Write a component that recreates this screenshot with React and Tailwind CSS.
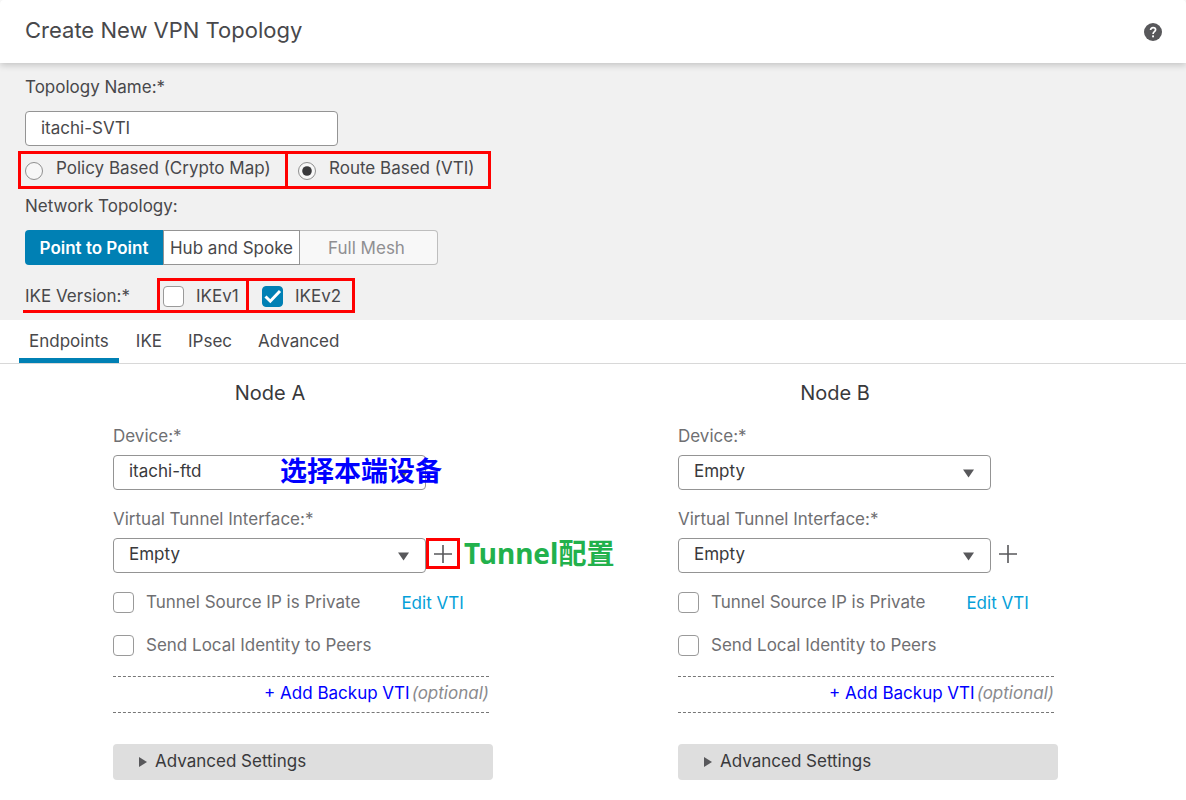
import { useState } from "react";

function Tick({ id, label, on = false }) {
  return (
    <span className="flex items-start gap-3">
      <span className="relative flex">
        <input
          id={id}
          type="checkbox"
          defaultChecked={on}
          className="peer h-[21px] w-[21px] appearance-none rounded border border-[#9a9a9a] bg-white checked:border-[#0080b4] checked:bg-[#0080b4]"
        />
        <svg
          viewBox="0 0 21 21"
          className="pointer-events-none absolute inset-0 hidden h-[21px] w-[21px] peer-checked:block"
          fill="none"
          stroke="white"
          strokeWidth="3"
        >
          <path d="M3.5 10.5 8.3 15.2 18 5" />
        </svg>
      </span>
      <label htmlFor={id} className="leading-5">
        {label}
      </label>
    </span>
  );
}

function Radio({ id, label, value, onPick, className }) {
  return (
    <span className={`flex h-8 items-start ${className}`}>
      <span className="relative mt-2 flex">
        <input
          id={id}
          name="topology-kind"
          type="radio"
          checked={value}
          onChange={onPick}
          className="peer h-[18px] w-[18px] appearance-none rounded-full border border-[#8f8f8f] bg-[#f7f7f7]"
        />
        <svg viewBox="0 0 18 18" className="pointer-events-none absolute inset-0 hidden peer-checked:block">
          <circle cx="9" cy="9" r="4.8" fill="#39393b" />
        </svg>
      </span>
      <label htmlFor={id} className="mt-1 leading-5">
        {label}
      </label>
    </span>
  );
}

function Picker({ id, value, children }) {
  return (
    <span className="relative block w-[313px] shrink-0">
      <select
        id={id}
        className="block h-[35px] w-full appearance-none rounded border border-[#949494] bg-white pb-[3px] pl-[15px] pr-8 text-[#39393b]"
      >
        <option>{value}</option>
      </select>
      <svg viewBox="0 0 11 9" className="pointer-events-none absolute right-[17px] top-[14px] h-[9px] w-[11px]" fill="#58585b">
        <path d="M0 0.5h11L5.5 8.5z" />
      </svg>
      {children}
    </span>
  );
}

function Node({ name, device, deviceNote, plusNote }) {
  const key = name.slice(-1).toLowerCase();
  return (
    <section className="pl-[85px] text-[#6f6f72]">
      <h2 className="w-[314px] text-center text-xl leading-6 text-[#39393b]">{name}</h2>
      <label htmlFor={`device-${key}`} className="mt-[21px] block leading-5">
        Device:*
      </label>
      <div className="mt-[9px]">
        <Picker id={`device-${key}`} value={device}>
          {deviceNote && (
            <span className="pointer-events-none absolute left-[167px] top-0 whitespace-nowrap font-['Noto_Sans_CJK_SC',sans-serif] text-[27px] font-bold leading-[30px] text-[#0000ff]">
              {deviceNote}
            </span>
          )}
        </Picker>
      </div>
      <label htmlFor={`vti-${key}`} className="mt-[19px] block leading-5">
        Virtual Tunnel Interface:*
      </label>
      <div className="mt-[9px] flex items-start">
        <Picker id={`vti-${key}`} value="Empty" />
        <button
          type="button"
          aria-label="Add interface"
          className={`flex h-[31px] w-[34px] shrink-0 items-center justify-center border-[3px] ${plusNote ? "border-[#ff0000]" : "border-transparent"}`}
        >
          <svg viewBox="0 0 18 18" className="h-[18px] w-[18px] shrink-0" stroke="#58585b" strokeWidth="1.6">
            <path d="M9 0v18M0 9h18" />
          </svg>
        </button>
        {plusNote && (
          <span className="ml-1 whitespace-nowrap font-['Noto_Sans','Noto_Sans_CJK_SC',sans-serif] text-[28px] font-bold leading-[30px] text-[#22b14c]">
            {plusNote}
          </span>
        )}
      </div>
      <div className="mt-[19px] flex w-[376px] items-start">
        <Tick id={`private-${key}`} label="Tunnel Source IP is Private" />
        <a href="#edit-vti" className="ml-[41px] leading-[22px] text-[#049fd9]">
          Edit VTI
        </a>
      </div>
      <div className="mt-[21px] flex">
        <Tick id={`identity-${key}`} label="Send Local Identity to Peers" />
      </div>
      <div className="mt-5 flex h-[37px] w-[376px] items-center justify-end gap-[2px] border-y border-dashed border-[#777777] pb-[3px]">
        <a href="#add-backup" className="leading-5 text-[#0000ff]">
          + Add Backup VTI
        </a>
        <em className="leading-5 text-[#8a8a8d]">(optional)</em>
      </div>
      <button
        type="button"
        className="mt-[31px] flex h-9 w-[380px] items-center gap-2 rounded bg-[#dedede] pb-[3px] pl-[26px] text-[#39393b]"
      >
        <svg viewBox="0 0 8 10" className="mt-[2px] h-[10px] w-2" fill="#58585b">
          <path d="M0 0l8 5-8 5z" />
        </svg>
        Advanced Settings
      </button>
    </section>
  );
}

export default function App() {
  const [kind, setKind] = useState("route");
  return (
    <main className="min-h-screen bg-white font-['Inter',sans-serif] text-[17px] text-[#48484b]">
      <header className="relative z-10 flex h-[63px] items-center justify-between rounded-t bg-white pl-[25px] pr-6 shadow-[0_2px_7px_rgba(0,0,0,0.2)]">
        <h1 className="pb-1 text-[22px] leading-8">Create New VPN Topology</h1>
        <button type="button" aria-label="Help" className="flex">
          <svg viewBox="0 0 18 18" className="h-[18px] w-[18px]">
            <circle cx="9" cy="9" r="9" fill="#58585b" />
            <path
              d="M6.6 7.1c0-1.6 1-2.5 2.5-2.5s2.5.9 2.5 2.2c0 1.9-2.5 1.9-2.5 4.1"
              fill="none"
              stroke="white"
              strokeWidth="1.7"
            />
            <rect x="8.1" y="12.4" width="1.9" height="1.9" fill="white" />
          </svg>
        </button>
      </header>

      <section className="bg-[#f1f1f1] px-[25px] pb-[7px] pt-[14px]">
        <label htmlFor="topology-name" className="block leading-5">
          Topology Name:*
        </label>
        <input
          id="topology-name"
          defaultValue="itachi-SVTI"
          className="mt-[14px] block h-[35px] w-[313px] rounded border border-[#949494] bg-white px-[15px] pb-[2px]"
        />
        <div className="-ml-[7px] mt-[5px] flex w-fit border-[3px] border-[#ff0000]">
          <Radio
            id="policy"
            label="Policy Based (Crypto Map)"
            value={kind === "policy"}
            onPick={() => setKind("policy")}
            className="w-[267px] gap-[13px] border-r-[3px] border-[#ff0000] pl-1"
          />
          <Radio
            id="route"
            label="Route Based (VTI)"
            value={kind === "route"}
            onPick={() => setKind("route")}
            className="w-[200px] gap-[13px] pl-[10px]"
          />
        </div>
        <div className="mt-[7px] leading-5">Network Topology:</div>
        <div className="mt-[14px] flex h-[35px] items-stretch whitespace-nowrap leading-5">
          <button type="button" className="w-[138px] rounded-l bg-[#0080b4] font-semibold text-white">
            Point to Point
          </button>
          <button type="button" className="flex w-[137px] items-center justify-center border border-[#949494] bg-white">
            Hub and Spoke
          </button>
          <button type="button" disabled className="w-[138px] rounded-r border border-l-0 border-[#bebebe] bg-[#f8f8f8] pr-1 text-[#8f8f92]">
            Full Mesh
          </button>
        </div>
        <div className="-ml-[2px] mt-[13px] flex h-[35px] w-fit border-b-[3px] border-[#ff0000]">
          <span className="w-[134px] pl-[2px] pt-2 leading-5">IKE Version:*</span>
          <span className="flex w-[92px] border-x-[3px] border-t-[3px] border-[#ff0000] pl-[3px] pt-[5px]">
            <Tick id="ikev1" label="IKEv1" />
          </span>
          <span className="flex w-[106px] border-r-[3px] border-t-[3px] border-[#ff0000] pl-[13px] pt-[5px]">
            <Tick id="ikev2" label="IKEv2" on />
          </span>
        </div>
      </section>

      <nav className="flex h-11 items-stretch gap-2 border-b border-[#d8d8d8] pl-[19px] leading-5">
        <a href="#endpoints" className="border-b-[5px] border-[#0080b4] px-[10px] pt-[11px]">
          Endpoints
        </a>
        <a href="#ike" className="px-[9px] pt-[11px]">
          IKE
        </a>
        <a href="#ipsec" className="px-[9px] pt-[11px]">
          IPsec
        </a>
        <a href="#advanced" className="px-[9px] pt-[11px]">
          Advanced
        </a>
      </nav>

      <div className="grid grid-cols-2 px-7 pt-[17px] leading-5">
        <Node name="Node A" device="itachi-ftd" deviceNote="选择本端设备" plusNote="Tunnel配置" />
        <Node name="Node B" device="Empty" />
      </div>
    </main>
  );
}
